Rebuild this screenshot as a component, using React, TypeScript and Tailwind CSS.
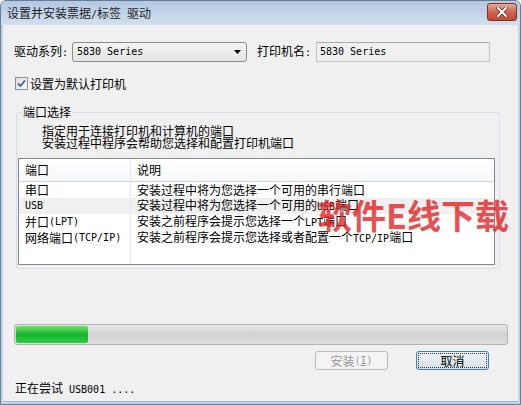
import React from "react";

function M({ children, className = "" }: { children: React.ReactNode; className?: string }) {
  return <span className={"font-['DejaVu_Sans_Mono',monospace] text-[10px] " + className}>{children}</span>;
}

const rows: [React.ReactNode, React.ReactNode, boolean][] = [
  ["串口", "安装过程中将为您选择一个可用的串行端口", false],
  [<M>USB</M>, <>安装过程中将为您选择一个可用的<M>USB</M>端口</>, true],
  [<>并口<M>(LPT)</M></>, <>安装之前程序会提示您选择一个<M>LPT</M>端口</>, false],
  [<>网络端口<M>(TCP/IP)</M></>, <>安装之前程序会提示您选择或者配置一个<M>TCP/IP</M>端口</>, false],
];

export default function App() {
  return (
    <div className="w-[521px] h-[405px] flex flex-col bg-[#c3d4e9] border border-[#687c96] rounded-t-[6px] overflow-hidden font-['Noto_Sans_CJK_SC',sans-serif] text-[12px] text-black leading-[14px]">
      {/* title bar */}
      <div className="h-[24px] shrink-0 flex items-center justify-between pl-[6px] pr-[3px] bg-gradient-to-b from-[#b3c8e2] to-[#d2dfef]">
        <span className="text-[#1e1e1e] mt-[1px]">设置并安装票据<M>/</M>标签<M> </M>驱动</span>
        <div className="w-[30px] h-[18px] mb-[2px] rounded-[3px] border border-[#7a3226] bg-gradient-to-b from-[#e6a897] via-[#d0644f] to-[#c24a32] flex items-center justify-center">
          <svg width="12" height="10" viewBox="0 0 12 10">
            <path d="M2 1 L10 9 M10 1 L2 9" stroke="#5a1a10" strokeWidth="3.4" strokeLinecap="square" />
            <path d="M2 1 L10 9 M10 1 L2 9" stroke="#ffffff" strokeWidth="2.2" strokeLinecap="square" />
          </svg>
        </div>
      </div>

      {/* client area */}
      <div className="relative flex-1 mx-[2px] mb-[2px] bg-[#f0f0f0] flex flex-col border-b border-[#9ab7d8]">
        {/* row 1 */}
        <div className="mt-[17px] h-[20px] flex items-center pl-[11px]">
          <span className="w-[58px]">驱动系列<M>:</M></span>
          <div className="w-[175px] h-[20px] rounded-[3px] border border-[#8b8c8d] bg-gradient-to-b from-[#f4f4f4] to-[#e4e4e4] flex items-center pl-[4px] pr-[5px] justify-between">
            <M>5830 Series</M>
            <svg width="7" height="4" viewBox="0 0 7 4"><path d="M0 0 H7 L3.5 4 Z" fill="#000" /></svg>
          </div>
          <span className="ml-[10px] w-[59px]">打印机名<M>:</M></span>
          <div className="w-[174px] h-[20px] border border-[#c3c6cb] border-t-[#a6a9ae] bg-[#f0f0f0] flex items-center pl-[3px]">
            <M>5830 Series</M>
          </div>
        </div>

        {/* checkbox */}
        <div className="mt-[15px] h-[13px] flex items-center pl-[12px]">
          <div className="w-[13px] h-[13px] border border-[#8e8f8f] bg-gradient-to-br from-[#dcdcdc] to-[#fbfbfb] flex items-center justify-center">
            <svg width="9" height="9" viewBox="0 0 9 9"><path d="M1 4.5 L3.5 7 L8 1.5" stroke="#4a5e95" strokeWidth="1.8" fill="none" /></svg>
          </div>
          <span className="ml-[2px]">设置为默认打印机</span>
        </div>

        {/* group box */}
        <fieldset className="mt-[15px] ml-[13px] w-[484px] border border-[#d5dfe5] rounded-[3px] pb-[3px]">
          <legend className="ml-[5px] px-[1px] leading-[14px]">端口选择</legend>
          <div className="pl-[25px] mt-[6px] leading-[12px]">
            <div>指定用于连接打印机和计算机的端口</div>
            <div>安装过程中程序会帮助您选择和配置打印机端口</div>
          </div>
          <div className="mt-[9px] ml-[1px] w-[477px] h-[107px] border border-[#828790] bg-white flex flex-col">
            <div className="h-[23px] shrink-0 flex border-b border-[#d5d5d5] bg-gradient-to-b from-white to-[#f7f8fa]">
              <div className="w-[112px] border-r border-[#e3e8ee] pl-[6px] flex items-center">端口</div>
              <div className="flex-1 pl-[6px] flex items-center">说明</div>
            </div>
            <div className="flex-1 relative flex flex-col">
              {rows.map(([a, b, sel], i) => (
                <div key={i} className={"h-[16px] flex items-center " + (sel ? "bg-[#f0f0f0]" : "")}>
                  <div className="w-[112px] h-full border-r border-[#e6e6e6] pl-[6px] flex items-center whitespace-nowrap">{a}</div>
                  <div className="flex-1 pl-[6px] whitespace-nowrap">{b}</div>
                </div>
              ))}
              <div className="flex-1 flex">
                <div className="w-[112px] border-r border-[#e6e6e6]" />
              </div>
            </div>
          </div>
        </fieldset>

        {/* progress */}
        <div className="mt-[55px] ml-[11px] w-[494px] h-[21px] rounded-[3px] border border-[#b2b2b2] bg-gradient-to-b from-[#e8e8e8] via-[#d2d2d2] to-[#dedede] p-[1px]">
          <div className="w-[72px] h-full rounded-[2px] bg-gradient-to-b from-[#69df6b] via-[#0cb52a] to-[#2fcb45]" />
        </div>

        {/* buttons */}
        <div className="mt-[6px] h-[19px] flex pl-[312px]">
          <div className="w-[73px] h-[19px] rounded-[3px] border border-[#b5b9bc] bg-[#f4f4f4] flex items-center justify-center text-[#9a9a9a]">
            安装<M>(<span className="underline">I</span>)</M>
          </div>
          <div className="ml-[28px] w-[73px] h-[19px] rounded-[3px] border border-[#3c7fb1] bg-gradient-to-b from-[#eef3f7] to-[#d6e0e8] p-[1px]">
            <div className="w-full h-full border border-dotted border-[#333] flex items-center justify-center">取消</div>
          </div>
        </div>

        {/* status */}
        <div className="mt-[11px] pl-[12px]">正在尝试<M> USB001 ....</M></div>

        {/* watermark */}
        <div className="absolute left-[315px] top-[170px] text-[34px] leading-[40px] font-bold text-[#e41f1f]/80 whitespace-nowrap font-['Noto_Sans_CJK_SC',sans-serif]">
          软件E线下载
        </div>
      </div>
    </div>
  );
}
